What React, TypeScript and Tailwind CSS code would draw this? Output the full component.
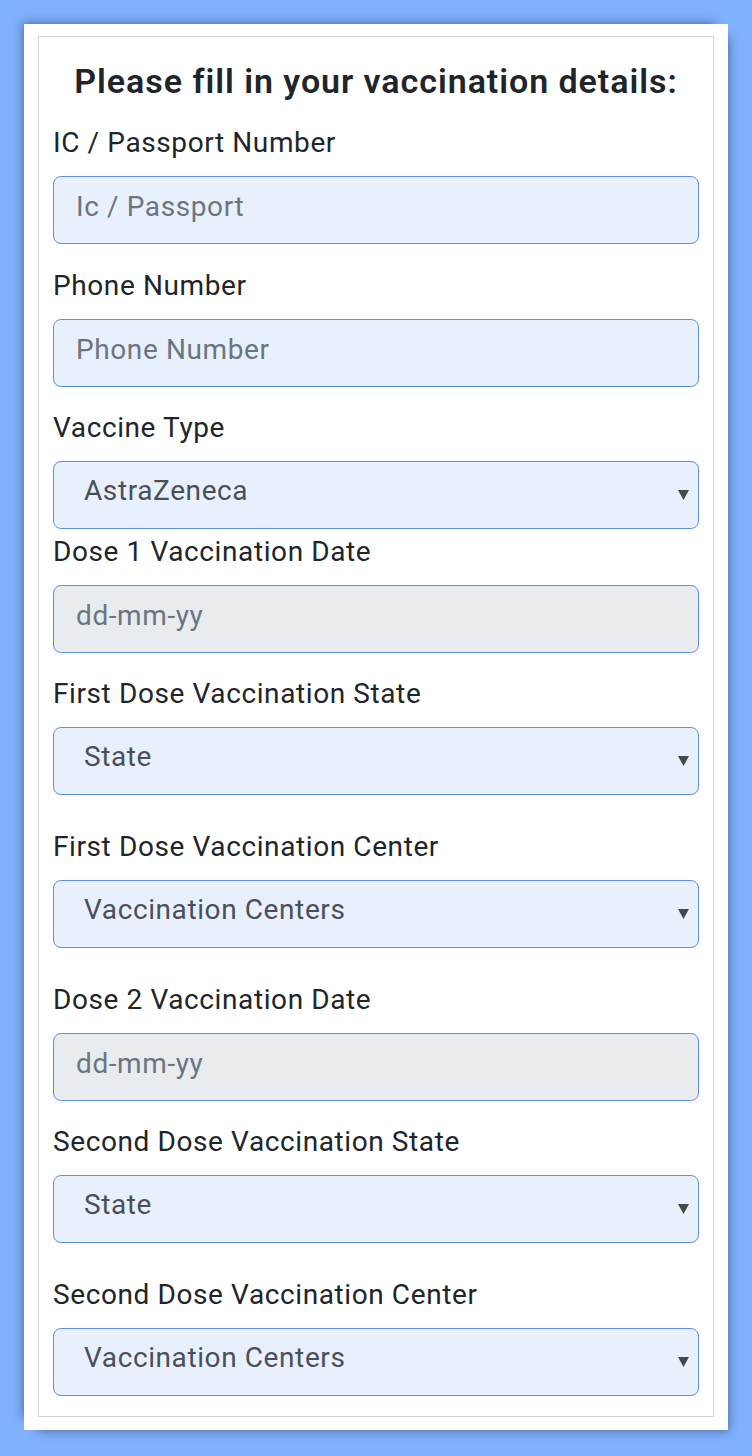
import React from "react";

type Field = {
  label: string;
  kind: "text" | "select" | "date";
  value: string;
  gap: string;
};

const fields: Field[] = [
  { label: "IC / Passport Number", kind: "text", value: "Ic / Passport", gap: "mt-0" },
  { label: "Phone Number", kind: "text", value: "Phone Number", gap: "mt-[21px]" },
  { label: "Vaccine Type", kind: "select", value: "AstraZeneca", gap: "mt-[20px]" },
  { label: "Dose 1 Vaccination Date", kind: "date", value: "dd-mm-yy", gap: "mt-[2px]" },
  { label: "First Dose Vaccination State", kind: "select", value: "State", gap: "mt-[20px]" },
  { label: "First Dose Vaccination Center", kind: "select", value: "Vaccination Centers", gap: "mt-[31px]" },
  { label: "Dose 2 Vaccination Date", kind: "date", value: "dd-mm-yy", gap: "mt-[31px]" },
  { label: "Second Dose Vaccination State", kind: "select", value: "State", gap: "mt-[20px]" },
  { label: "Second Dose Vaccination Center", kind: "select", value: "Vaccination Centers", gap: "mt-[31px]" },
];

const Arrow = () => (
  <svg className="pointer-events-none absolute right-[10px] top-[28px] w-[11px] h-[11px]" viewBox="0 0 10 10">
    <polygon points="0,1 10,1 5,10" fill="#45484c" />
  </svg>
);

const FieldRow = ({ f }: { f: Field }) => {
  const box =
    "h-[68px] w-full rounded-[8px] border-[1.5px] border-[#5a90e2] pb-[8px] text-[28px] tracking-[0.6px] outline-none";
  return (
    <div className={f.gap}>
      <label className="block text-[28px] leading-[42px] tracking-[0.6px] text-[#212529]">{f.label}</label>
      <div className="relative mt-[12px]">
        {f.kind === "text" && (
          <input
            className={`${box} bg-[#e8f0fe] pl-[22px] placeholder:text-[#6c757d]`}
            placeholder={f.value}
          />
        )}
        {f.kind === "date" && (
          <input
            className={`${box} bg-[#e9ecef] pl-[22px] placeholder:text-[#6c757d]`}
            placeholder={f.value}
            readOnly
          />
        )}
        {f.kind === "select" && (
          <>
            <select
              className={`${box} appearance-none bg-[#e8f0fe] pl-[30px] text-[#495057]`}
              defaultValue={f.value}
            >
              <option>{f.value}</option>
            </select>
            <Arrow />
          </>
        )}
      </div>
    </div>
  );
};

export default function App() {
  return (
    <div
      className="min-h-screen bg-[#80b1ff] px-[24px] pt-[24px] pb-[25px]"
      style={{ fontFamily: "Roboto, 'Noto Sans', sans-serif" }}
    >
      <div className="bg-white px-[14px] pt-[12px] pb-[13px] shadow-[-7px_-7px_10px_-6px_rgba(0,0,0,0.4),7px_7px_10px_-6px_rgba(0,0,0,0.4)]">
        <div className="border border-[#d3d3d3] px-[14px] pt-[24px] pb-[20px]">
          <h1 className="text-center text-[34px] font-semibold leading-[40px] tracking-[0.95px] text-[#212529]">
            Please fill in your vaccination details:
          </h1>
          <form className="mt-[21px]">
            {fields.map((f) => (
              <FieldRow key={f.label + f.gap} f={f} />
            ))}
          </form>
        </div>
      </div>
    </div>
  );
}
